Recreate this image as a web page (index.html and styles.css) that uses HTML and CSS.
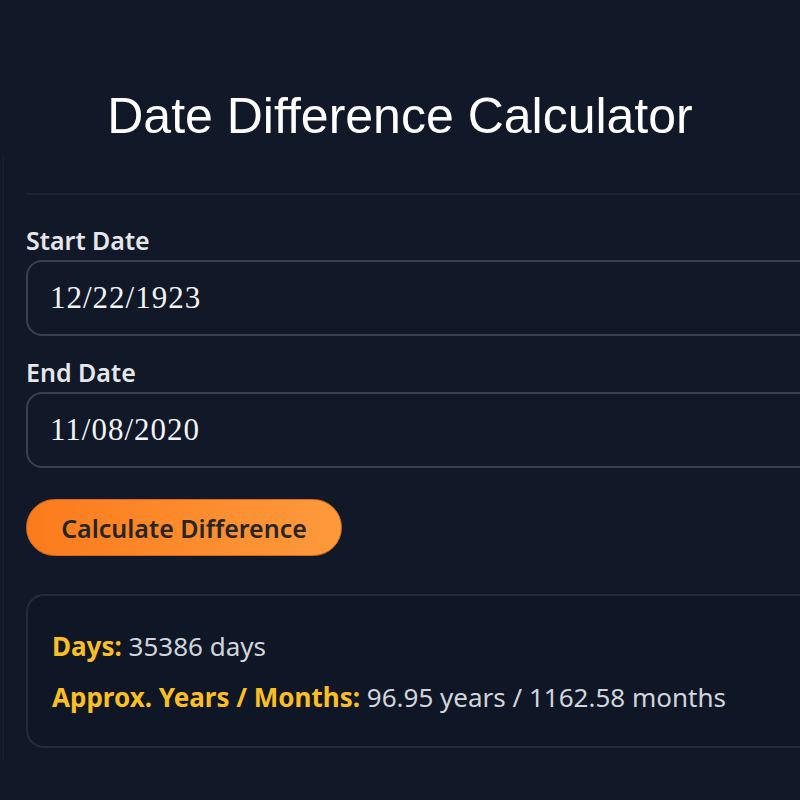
FILE: index.html
```html
<!DOCTYPE html>
<html lang="en">
<head>
<meta charset="utf-8">
<title>Date Difference Calculator</title>
<link rel="stylesheet" href="styles.css">
</head>
<body>
  <header class="hero">
    <h1 class="title">Date Difference Calculator</h1>
  </header>
  <main class="card">
    <hr class="divider">
    <div class="field">
      <label class="label" for="start">Start Date</label>
      <div class="input" id="start">12/22/1923</div>
    </div>
    <div class="field">
      <label class="label" for="end">End Date</label>
      <div class="input" id="end">11/08/2020</div>
    </div>
    <button class="btn" type="button">Calculate Difference</button>
    <section class="result">
      <p class="row"><span class="key">Days:</span> 35386 days</p>
      <p class="row"><span class="key">Approx. Years / Months:</span> 96.95 years / 1162.58 months</p>
    </section>
  </main>
</body>
</html>
```
FILE: styles.css
```css
html, body {
  margin: 0;
  padding: 0;
  background: #111827;
  overflow: hidden;
  height: 800px;
}

body {
  font-family: "Noto Sans", "Open Sans", sans-serif;
  color: #e5e7eb;
}

.hero {
  padding-top: 86px;
}

.title {
  margin: 0;
  font-family: "Liberation Sans", Arial, sans-serif;
  font-weight: 400;
  font-size: 50px;
  line-height: 60px;
  color: #ffffff;
  text-align: center;
}

.card {
  margin-top: 10px;
  margin-left: 3px;
  width: 900px;
  border-left: 1px solid #1a2130;
  padding: 37px 0 12px 22px;
}

.divider {
  margin: 0 0 30px;
  border: 0;
  height: 2px;
  background: #1c2231;
}

.field {
  display: flex;
  flex-direction: column;
  gap: 5px;
  margin-bottom: 21px;
}

.label {
  font-size: 25px;
  font-weight: 600;
  line-height: 30px;
  color: #e5e7eb;
  letter-spacing: 0;
}

.input {
  box-sizing: border-box;
  height: 76px;
  border: 2px solid #394150;
  border-radius: 16px;
  padding: 0 22px;
  display: flex;
  align-items: center;
  font-family: "Liberation Serif", "Times New Roman", serif;
  font-size: 31px;
  letter-spacing: 1px;
  color: #f3f4f6;
}

.btn {
  display: block;
  margin-top: 31px;
  box-sizing: border-box;
  width: 316px;
  height: 57px;
  border: 1px solid #d9681a;
  border-radius: 29px;
  background: linear-gradient(90deg, #fb7b1c 0%, #fd9a3c 100%);
  font-family: "Noto Sans", "Open Sans", sans-serif;
  font-size: 25px;
  font-weight: 600;
  color: #262626;
  letter-spacing: 0;
  padding: 0;
}

.result {
  margin-top: 38px;
  box-sizing: border-box;
  height: 154px;
  border: 2px solid #242b39;
  border-radius: 18px;
  background: #0f1727;
  padding: 25px 24px;
}

.row {
  margin: 0;
  font-size: 26px;
  line-height: 51px;
  color: #d1d5db;
  letter-spacing: 0;
}

.key {
  font-weight: 700;
  color: #fbbf24;
}
```
